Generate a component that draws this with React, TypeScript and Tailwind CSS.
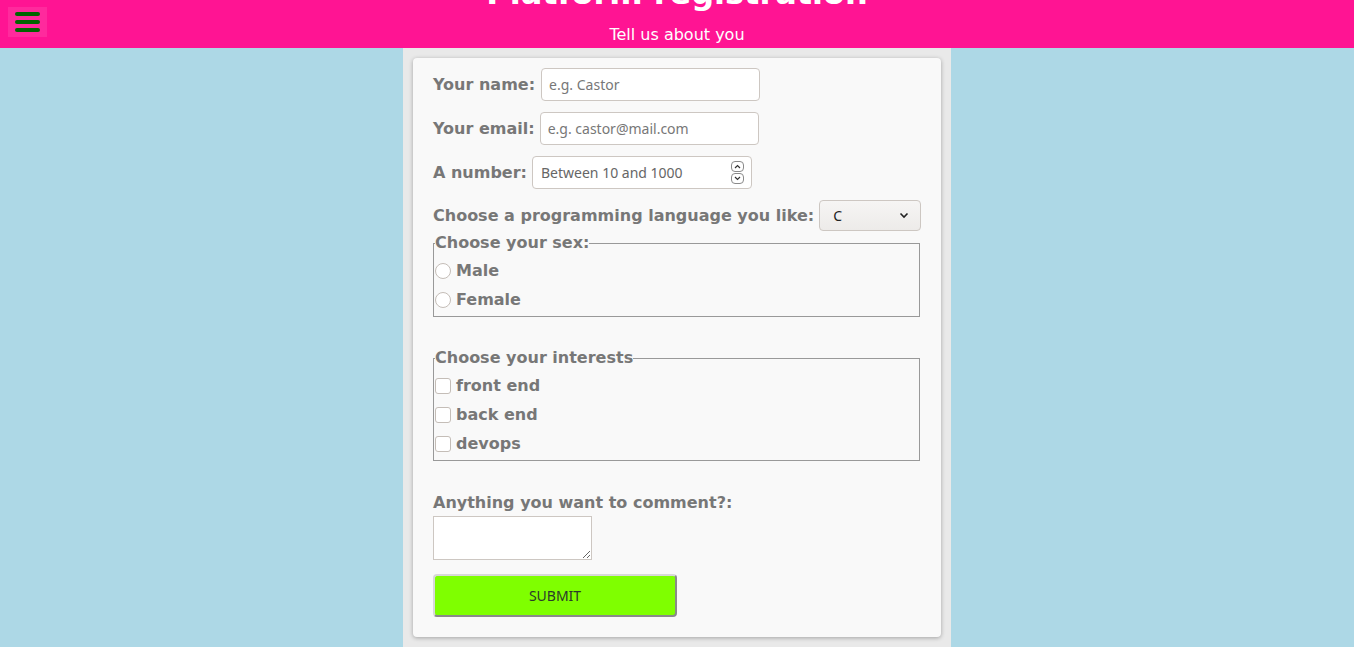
import { useState } from "react";

const label = "font-['DejaVu_Sans',sans-serif] font-bold text-[16px] text-[#777777] whitespace-nowrap";
const field =
  "h-[33px] rounded-[4px] border border-[#cdc7c2] bg-white px-[7px] font-['Noto_Sans',sans-serif] text-[14px] text-[#333] placeholder:text-[#777] outline-none";

function Spinner() {
  return (
    <div className="flex flex-col gap-[1px] mr-[7px]">
      <div className="w-[13px] h-[11px] rounded-[4px] border border-[#8a8a8a] flex items-center justify-center">
        <svg width="7" height="5" viewBox="0 0 7 5">
          <path d="M1 4 L3.5 1.5 L6 4" stroke="#333" strokeWidth="1.2" fill="none" />
        </svg>
      </div>
      <div className="w-[13px] h-[11px] rounded-[4px] border border-[#8a8a8a] flex items-center justify-center">
        <svg width="7" height="5" viewBox="0 0 7 5">
          <path d="M1 1 L3.5 3.5 L6 1" stroke="#333" strokeWidth="1.2" fill="none" />
        </svg>
      </div>
    </div>
  );
}

export default function App() {
  const [lang, setLang] = useState("C");

  return (
    <div className="min-h-screen bg-[#add8e6] font-['DejaVu_Sans',sans-serif]">
      {/* Header */}
      <header className="relative h-12 bg-[#ff1493] overflow-hidden text-white text-center">
        <h1 className="mt-[-26px] text-[32px] font-bold leading-[38px]">Platform registration</h1>
        <p className="mt-[13px] text-[16px] leading-[20px]">Tell us about you</p>
        <button className="absolute left-2 top-[7px] w-[39px] h-[30px] bg-[#ff2a9d] flex flex-col items-center justify-center gap-[4px]">
          <span className="block w-[25px] h-[4px] rounded-full bg-[#006400]" />
          <span className="block w-[25px] h-[4px] rounded-full bg-[#006400]" />
          <span className="block w-[25px] h-[4px] rounded-full bg-[#006400]" />
        </button>
      </header>

      {/* Column */}
      <div className="w-[548px] mx-auto bg-[#e9e9e9] px-[10px] pt-[10px] min-h-[599px]">
        <form className="bg-[#f9f9f9] rounded-[4px] shadow-[0_1px_4px_rgba(0,0,0,0.3)] px-5 pt-[10px] pb-5">
          <div className="flex items-center gap-[6px]">
            <span className={label}>Your name:</span>
            <input className={`${field} w-[219px]`} placeholder="e.g. Castor" />
          </div>
          <div className="flex items-center gap-[5px] mt-[11px]">
            <span className={label}>Your email:</span>
            <input className={`${field} w-[219px]`} placeholder="e.g. castor@mail.com" />
          </div>
          <div className="flex items-center gap-[5px] mt-[11px]">
            <span className={label}>A number:</span>
            <div className="flex items-center w-[220px] h-[33px] rounded-[4px] border border-[#cdc7c2] bg-white">
              <input
                className="flex-1 min-w-0 h-full bg-transparent px-[8px] font-['Noto_Sans',sans-serif] text-[14px] text-[#333] placeholder:text-[#666] outline-none"
                placeholder="Between 10 and 1000"
              />
              <Spinner />
            </div>
          </div>
          <div className="flex items-center gap-[5px] mt-[11px]">
            <span className={label}>Choose a programming language you like:</span>
            <div className="relative shrink-0">
              <select
                value={lang}
                onChange={(e) => setLang(e.target.value)}
                className="appearance-none w-[102px] h-[31px] rounded-[4px] border border-[#cdc7c2] bg-gradient-to-b from-[#f6f5f4] to-[#edebe9] pl-[13px] font-['Noto_Sans',sans-serif] text-[14px] text-[#222] outline-none"
              >
                <option>C</option>
                <option>C++</option>
                <option>Java</option>
                <option>Python</option>
              </select>
              <svg className="absolute right-[12px] top-[12px] pointer-events-none" width="10" height="7" viewBox="0 0 10 7">
                <path d="M1.5 1.5 L5 5 L8.5 1.5" stroke="#222" strokeWidth="1.6" fill="none" />
              </svg>
            </div>
          </div>

          <fieldset className="mt-[3px] mr-[1px] border border-[#999] px-0 pt-[4px] pb-[2px]">
            <legend className={`${label} ml-[1px] leading-[18px]`}>Choose your sex:</legend>
            {["Male", "Female"].map((s) => (
              <label key={s} className="flex items-center h-[29px] gap-[5px] pl-[1px]">
                <input
                  type="radio"
                  name="sex"
                  className="appearance-none w-[16px] h-[16px] rounded-full border border-[#c4bdb7] bg-white"
                />
                <span className={label}>{s}</span>
              </label>
            ))}
          </fieldset>

          <fieldset className="mt-[32px] mr-[1px] border border-[#999] px-0 pt-[4px] pb-[2px]">
            <legend className={`${label} ml-[1px] leading-[18px]`}>Choose your interests</legend>
            {["front end", "back end", "devops"].map((s) => (
              <label key={s} className="flex items-center h-[29px] gap-[5px] pl-[1px]">
                <input
                  type="checkbox"
                  className="appearance-none w-[16px] h-[16px] rounded-[3px] border border-[#c4bdb7] bg-white"
                />
                <span className={label}>{s}</span>
              </label>
            ))}
          </fieldset>

          <p className={`${label} mt-[32px] leading-[20px]`}>Anything you want to comment?:</p>
          <textarea className="block mt-[3px] w-[159px] h-[44px] border border-[#cdc7c2] bg-white outline-none" />

          <button
            type="button"
            className="mt-[14px] w-[244px] h-[43px] rounded-[4px] bg-[#7fff00] border-2 border-t-[#d8d8d8] border-l-[#d8d8d8] border-r-[#8a8a8a] border-b-[#8a8a8a] font-['Noto_Sans',sans-serif] text-[14px] text-[#2b3a2b]"
          >
            SUBMIT
          </button>
        </form>
      </div>
    </div>
  );
}
